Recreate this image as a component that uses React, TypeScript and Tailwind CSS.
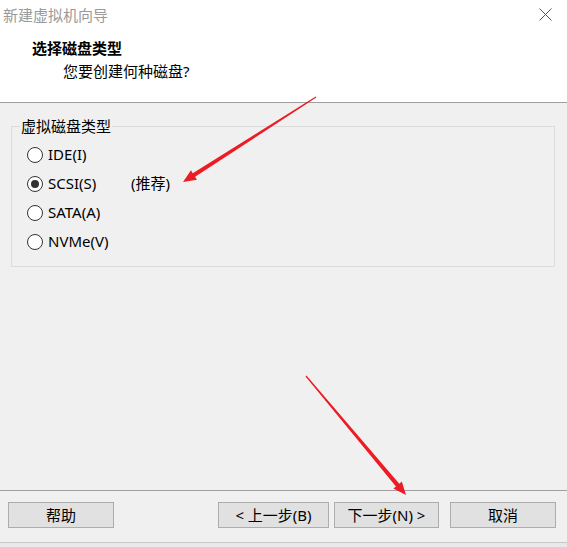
const FONT = "font-['Noto_Sans','Noto_Sans_CJK_SC',sans-serif]"

const DISK_TYPES = [
  { id: 'ide', label: 'IDE(I)' },
  { id: 'scsi', label: 'SCSI(S)', note: '(推荐)' },
  { id: 'sata', label: 'SATA(A)' },
  { id: 'nvme', label: 'NVMe(V)' },
]

type Pt = [number, number]

// tapered red annotation arrow, tip at `to`
function arrowPoints(from: Pt, to: Pt, headLen = 13, headHalf = 5.5) {
  const dx = to[0] - from[0]
  const dy = to[1] - from[1]
  const len = Math.hypot(dx, dy)
  const ux = dx / len
  const uy = dy / len
  const nx = -uy
  const ny = ux
  const bx = to[0] - ux * headLen
  const by = to[1] - uy * headLen
  const pts: Pt[] = [
    [from[0] + nx * 0.6, from[1] + ny * 0.6],
    [bx + nx * 2.2, by + ny * 2.2],
    [bx + nx * headHalf, by + ny * headHalf],
    to,
    [bx - nx * headHalf, by - ny * headHalf],
    [bx - nx * 2.2, by - ny * 2.2],
    [from[0] - nx * 0.6, from[1] - ny * 0.6],
  ]
  return pts.map((p) => p.join(',')).join(' ')
}

function Radio({ checked }: { checked?: boolean }) {
  return (
    <span className="flex h-[16px] w-[16px] items-center justify-center rounded-full border border-[#333333] bg-white">
      {checked && <span className="h-[8px] w-[8px] rounded-full bg-[#333333]" />}
    </span>
  )
}

function Button({ children, w }: { children: React.ReactNode; w: string }) {
  return (
    <button className={`flex h-[26px] ${w} items-center justify-center border border-[#adadad] bg-[#e1e1e1] text-[15px] text-black`}>
      {children}
    </button>
  )
}

export default function App() {
  return (
    <div className={`relative flex h-[547px] w-[567px] flex-col overflow-hidden bg-[#f0f0f0] ${FONT}`}>
      {/* header */}
      <div className="h-[103px] border-b border-[#a0a0a0] bg-white">
        <div className="flex h-[30px] items-center justify-between pl-[3px] pr-[15px]">
          <span className="text-[15px] text-[#9a9a9a]">新建虚拟机向导</span>
          <svg width="13" height="13" viewBox="0 0 13 13" className="mt-[-2px]">
            <path d="M0.5 0.5 L12.5 12.5 M12.5 0.5 L0.5 12.5" stroke="#555" strokeWidth="1" />
          </svg>
        </div>
        <div className="pt-[8px]">
          <div className="flex h-[20px] items-center pl-[32px] text-[15px] font-bold text-black">选择磁盘类型</div>
          <div className="mt-[3px] flex h-[20px] items-center pl-[63px] text-[15px] text-black">您要创建何种磁盘?</div>
        </div>
      </div>

      {/* body */}
      <div className="flex-1">
        <fieldset className="ml-[11px] mt-[13px] w-[544px] border border-[#dcdcdc] pb-[10px] pl-[8px] pt-[4px]">
          <legend className="h-[20px] px-[1px] text-[15px] leading-[20px] text-black">虚拟磁盘类型</legend>
          {DISK_TYPES.map((d) => (
            <div key={d.id} className="flex h-[29px] items-center pl-[7px] text-[15px] text-black">
              <Radio checked={d.id === 'scsi'} />
              <span className="ml-[5px] w-[83px]">{d.label}</span>
              {d.note && <span>{d.note}</span>}
            </div>
          ))}
        </fieldset>
      </div>

      {/* footer */}
      <div className="h-[52px] border-t border-[#a0a0a0]">
        <div className="flex items-center pl-[8px] pr-[11px] pt-[11px]">
          <Button w="w-[106px]">帮助</Button>
          <div className="flex-1" />
          <Button w="w-[111px]">&lt; 上一步(B)</Button>
          <div className="w-[5px]" />
          <Button w="w-[105px]">下一步(N) &gt;</Button>
          <div className="w-[11px]" />
          <Button w="w-[106px]">取消</Button>
        </div>
      </div>
      <div className="h-[5px] border-t border-[#c8c8c8] bg-[#e9e9e9]" />

      {/* annotation arrows */}
      <svg className="pointer-events-none absolute inset-0" width="567" height="547">
        <polygon points={arrowPoints([316, 97], [183, 182])} fill="#ec1c24" />
        <polygon points={arrowPoints([306, 376], [406, 495])} fill="#ec1c24" />
      </svg>
    </div>
  )
}
